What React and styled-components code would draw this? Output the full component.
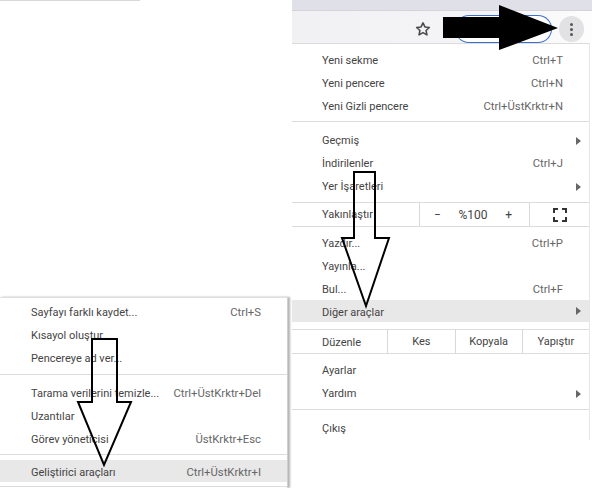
import React from "react";
import styled, { createGlobalStyle } from "styled-components";

const GlobalStyle = createGlobalStyle`
  html, body {
    margin: 0;
    padding: 0;
    background: #fff;
  }
`;

const Page = styled.div`
  position: relative;
  width: 592px;
  height: 488px;
  overflow: hidden;
  background: #fff;
  font-family: Roboto, "Noto Sans", sans-serif;
  font-size: 11px;
  color: #444;
`;

const TopLine = styled.div`
  width: 140px;
  height: 1px;
  background: #d8d8d8;
`;

const BrowserColumn = styled.div`
  position: absolute;
  top: 0;
  right: 0;
  width: 300px;
`;

const TabStrip = styled.div`
  height: 10px;
  background: #e0e0e9;
  border-bottom: 1px solid #d4d4d8;
`;

const Toolbar = styled.div`
  height: 32px;
  box-sizing: border-box;
  padding: 4px 8px 0 0;
  background: linear-gradient(to right, #f1f1f3, #f5f5f7 70%, #fdfdfd);
  display: flex;
  align-items: center;
  justify-content: flex-end;
`;

const StarButton = styled.div`
  display: flex;
  margin-right: 24px;
  color: #4a4a4a;
`;

const ProfilePill = styled.div`
  width: 97px;
  height: 28px;
  box-sizing: border-box;
  border: 1px solid #3b6fd0;
  border-left-color: #2a9d5c;
  border-radius: 14px;
  background: #fff;
  margin-right: 7px;
`;

const MoreButton = styled.div`
  width: 25px;
  height: 26px;
  border-radius: 50%;
  background: #e2e2e4;
  display: flex;
  flex-direction: column;
  align-items: center;
  justify-content: center;
  gap: 2px;
`;

const Dot = styled.span`
  width: 3px;
  height: 3px;
  border-radius: 50%;
  background: #555;
`;

const Menu = styled.div`
  width: 298px;
  height: 397px;
  box-sizing: border-box;
  background: #fff;
  border-top: 1px solid #dcdcdc;
  border-right: 1px solid #e6e6e6;
`;

const LeftMenu = styled.div`
  position: absolute;
  left: 0;
  top: 297px;
  width: 288px;
  height: 191px;
  background: #fff;
  border-top: 1px solid #e0e0e0;
  border-right: 1px solid #cfcfcf;
  box-shadow: 2px 0 2px rgba(0, 0, 0, 0.3);
  box-sizing: border-box;
  padding-top: 3px;
`;

const Section = styled.div`
  padding: ${(p) => p.$pad || "5px 0"};
  border-bottom: ${(p) => (p.$last ? "none" : "1px solid #dcdcdc")};
`;

const Row = styled.div`
  height: ${(p) => p.$h || 23}px;
  box-sizing: border-box;
  display: flex;
  align-items: center;
  justify-content: space-between;
  padding: ${(p) => (p.$active ? "3px" : "0")} 26px 0 ${(p) => p.$left || 30}px;
  white-space: nowrap;
  background: ${(p) => (p.$active ? "#e8e8e8" : "transparent")};
  position: relative;
`;

const Shortcut = styled.span`
  color: #666;
  font-size: 11.3px;
`;

const Caret = styled.span`
  position: absolute;
  right: 8px;
  top: 50%;
  margin-top: -4px;
  border-left: 5px solid #666;
  border-top: 4px solid transparent;
  border-bottom: 4px solid transparent;
`;

const ControlRow = styled.div`
  height: 23px;
  display: flex;
  align-items: stretch;
  border-bottom: 1px solid #dcdcdc;
`;

const ControlLabel = styled.div`
  width: ${(p) => p.$w}px;
  padding: ${(p) => p.$top || 0}px 0 0 30px;
  box-sizing: border-box;
  display: flex;
  align-items: center;
`;

const ZoomGroup = styled.div`
  width: 111px;
  border-left: 1px solid #d8d8d8;
  border-right: 1px solid #d8d8d8;
  display: flex;
  align-items: center;
  justify-content: space-between;
  padding: 0 17px 0 14px;
  box-sizing: border-box;
  font-size: 12px;
`;

const FullscreenCell = styled.div`
  flex: 1;
  display: flex;
  align-items: center;
  justify-content: center;
  color: #333;
`;

const EditCell = styled.div`
  width: 68px;
  border-left: 1px solid #d8d8d8;
  box-sizing: border-box;
  display: flex;
  align-items: center;
  justify-content: center;
`;

const ArrowLayer = styled.svg`
  position: absolute;
  left: 0;
  top: 0;
  pointer-events: none;
`;

const Fullscreen = () => (
  <svg width="14" height="14" viewBox="0 0 14 14" fill="none" stroke="currentColor" strokeWidth="2">
    <path d="M1 5V1h4M9 1h4v4M13 9v4H9M5 13H1V9" />
  </svg>
);

const Star = () => (
  <svg width="16" height="16" viewBox="0 0 24 24" fill="none" stroke="currentColor" strokeWidth="2.4" strokeLinejoin="round">
    <path d="M12 2.8l2.9 6.1 6.6.8-4.9 4.5 1.3 6.6L12 17.5l-5.9 3.3 1.3-6.6L2.500 9.700l6.600-.8z" />
  </svg>
);

const App = () => (
  <>
    <GlobalStyle />
    <Page>
      <TopLine />
      <BrowserColumn>
        <TabStrip />
        <Toolbar>
          <StarButton><Star /></StarButton>
          <ProfilePill />
          <MoreButton><Dot /><Dot /><Dot /></MoreButton>
        </Toolbar>
        <Menu>
          <Section $pad="5px 0 3px">
            <Row>Yeni sekme<Shortcut>Ctrl+T</Shortcut></Row>
            <Row>Yeni pencere<Shortcut>Ctrl+N</Shortcut></Row>
            <Row>Yeni Gizli pencere<Shortcut>Ctrl+ÜstKrktr+N</Shortcut></Row>
          </Section>
          <Section $pad="7px 0 4px">
            <Row>Geçmiş<Caret /></Row>
            <Row>İndirilenler<Shortcut>Ctrl+J</Shortcut></Row>
            <Row>Yer İşaretleri<Caret /></Row>
          </Section>
          <ControlRow>
            <ControlLabel $w={127}>Yakınlaştır</ControlLabel>
            <ZoomGroup><span>−</span><span>%100</span><span>+</span></ZoomGroup>
            <FullscreenCell><Fullscreen /></FullscreenCell>
          </ControlRow>
          <Section $pad="5px 0 7px">
            <Row>Yazdır...<Shortcut>Ctrl+P</Shortcut></Row>
            <Row>Yayınla...</Row>
            <Row $h={22}>Bul...<Shortcut>Ctrl+F</Shortcut></Row>
            <Row $h={22} $active>Diğer araçlar<Caret /></Row>
          </Section>
          <ControlRow>
            <ControlLabel $w={96} $top={2}>Düzenle</ControlLabel>
            <EditCell>Kes</EditCell>
            <EditCell>Kopyala</EditCell>
            <EditCell>Yapıştır</EditCell>
          </ControlRow>
          <Section $pad="5px 0 4px">
            <Row>Ayarlar</Row>
            <Row>Yardım<Caret /></Row>
          </Section>
          <Section $pad="7px 0" $last>
            <Row>Çıkış</Row>
          </Section>
        </Menu>
      </BrowserColumn>
      <LeftMenu>
        <Section $pad="0 0 4px">
          <Row $left={31}>Sayfayı farklı kaydet...<Shortcut>Ctrl+S</Shortcut></Row>
          <Row $left={31}>Kısayol oluştur...</Row>
          <Row $left={31}>Pencereye ad ver...</Row>
        </Section>
        <Section $pad="7px 0 3px">
          <Row $left={31}>Tarama verilerini temizle...<Shortcut>Ctrl+ÜstKrktr+Del</Shortcut></Row>
          <Row $left={31}>Uzantılar</Row>
          <Row $left={31}>Görev yöneticisi<Shortcut>ÜstKrktr+Esc</Shortcut></Row>
        </Section>
        <Section $pad="5px 0 4px">
          <Row $h={22} $left={31} $active>Geliştirici araçları<Shortcut>Ctrl+ÜstKrktr+I</Shortcut></Row>
        </Section>
      </LeftMenu>
      <ArrowLayer width="592" height="488" viewBox="0 0 592 488">
        <path d="M443 17H499V5L558 28 499 50V38H443Z" fill="#000" />
        <path d="M354 172H375V238H389L366 306 342 238H354Z" fill="none" stroke="#000" strokeWidth="2" />
        <path d="M92 339H117V402H131L104 465 78 402H92Z" fill="none" stroke="#000" strokeWidth="2" />
      </ArrowLayer>
    </Page>
  </>
);

export default App;
